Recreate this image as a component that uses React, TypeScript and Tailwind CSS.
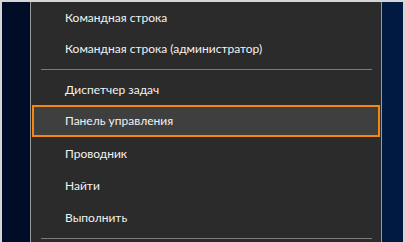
import React from 'react';

type Item = { label: string; h: string; active?: boolean };

const groupA: Item[] = [
  { label: 'Командная строка', h: 'h-[31px]' },
  { label: 'Командная строка (администратор)', h: 'h-[31px]' },
];

const groupB: Item[] = [
  { label: 'Диспетчер задач', h: 'h-[31px]' },
  { label: 'Панель управления', h: 'h-[32px]', active: true },
  { label: 'Проводник', h: 'h-[33px]' },
  { label: 'Найти', h: 'h-[32px]' },
  { label: 'Выполнить', h: 'h-[32px]' },
];

const MenuRow: React.FC<{ item: Item }> = ({ item }) => (
  <div
    className={
      item.active
        ? `${item.h} mx-px flex items-center pl-[31px] border-2 border-[#f5860f] bg-[#3f3f3f]`
        : `${item.h} flex items-center pl-[34px]`
    }
  >
    <span className="text-[12px] leading-none text-[#f2f2f2]">{item.label}</span>
  </div>
);

export default function App() {
  return (
    <div
      className="w-[405px] h-[242px] flex border-l-2 border-t-2 border-r-2 border-[#d6d6d6] bg-[#000c26] overflow-hidden"
      style={{ fontFamily: 'Lato, "Noto Sans", sans-serif' }}
    >
      <div className="w-[28px] shrink-0 bg-[#000d27]" />
      <div className="w-[352px] shrink-0 h-full border-x border-[#9a9a9a] bg-[#2b2b2b] flex flex-col">
        {groupA.map((item) => (
          <MenuRow key={item.label} item={item} />
        ))}
        <div className="h-[10px] pt-[5px] pl-[10px] pr-[9px]">
          <div className="h-px bg-[#7b7b7b]" />
        </div>
        {groupB.map((item) => (
          <MenuRow key={item.label} item={item} />
        ))}
        <div className="h-[6px] pt-[4px] pl-[10px] pr-[9px]">
          <div className="h-px bg-[#7b7b7b]" />
        </div>
      </div>
      <div className="flex-1 bg-[#001a42]" />
    </div>
  );
}
